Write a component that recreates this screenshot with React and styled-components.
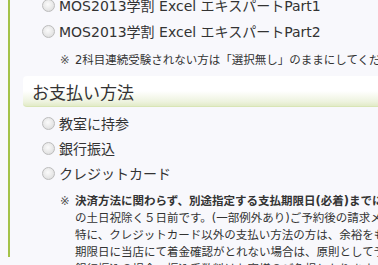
import styled, { createGlobalStyle } from "styled-components"

const GlobalStyle = createGlobalStyle`
  html, body {
    margin: 0;
    padding: 0;
    background: #f8f8fc;
    overflow: hidden;
  }
  body {
    font-family: "DejaVu Sans", "Noto Sans CJK JP", sans-serif;
    color: #333;
  }
`

const Page = styled.div`
  width: 378px;
  height: 265px;
  overflow: hidden;
  padding-left: 8px;
  box-sizing: border-box;
`
const Section = styled.div`
  border-left: 2px solid #a4c24a;
  padding-left: 13px;
  height: 100%;
  width: 600px;
`
const OptionList = styled.ul`
  list-style: none;
  margin: ${(p) => p.$top}px 0 0;
  padding: 0 0 0 19px;
`
const Option = styled.li`
  display: flex;
  align-items: center;
  height: ${(p) => p.$h}px;
  font-size: 14px;
  white-space: nowrap;
`
const Radio = styled.span`
  flex-shrink: 0;
  width: 11px;
  height: 11px;
  border-radius: 50%;
  border: 1px solid #bcbcbc;
  background: radial-gradient(circle at 45% 40%, #fbfbfb 0%, #e6e6e6 60%, #d4d4d4 100%);
  margin-right: 4px;
`
const Note = styled.div`
  display: flex;
  margin: ${(p) => p.$top}px 0 0 18px;
  font-size: 11.5px;
  line-height: 17px;
  white-space: nowrap;
`
const Mark = styled.span`
  width: 15px;
  flex-shrink: 0;
  color: #555;
`
const Body = styled.div`
  strong {
    font-weight: 700;
  }
`
const Heading = styled.h3`
  margin: 7px 0 0;
  height: 31px;
  box-sizing: border-box;
  padding-left: 9px;
  display: flex;
  align-items: center;
  font-size: 17px;
  font-weight: 400;
  color: #333;
  border-radius: 4px;
  background: linear-gradient(to bottom, #ffffff 0%, #ffffff 50%, #eef3df 85%, #e2ebc8 100%);
  border-bottom: 1px solid #d9e5b6;
`

export default function App() {
  return (
    <>
      <GlobalStyle />
      <Page>
        <Section>
          <OptionList $top={-8}>
            <Option $h={26}><Radio />MOS2013学割 Excel エキスパートPart1</Option>
            <Option $h={26}><Radio />MOS2013学割 Excel エキスパートPart2</Option>
          </OptionList>
          <OptionList $top={0}>
            <Note $top={8}>
              <Mark>※</Mark>
              <Body>2科目連続受験されない方は「選択無し」のままにしてください。</Body>
            </Note>
          </OptionList>
          <Heading>お支払い方法</Heading>
          <OptionList $top={3.5}>
            <Option $h={25}><Radio />教室に持参</Option>
            <Option $h={25}><Radio />銀行振込</Option>
            <Option $h={25}><Radio />クレジットカード</Option>
            <Note $top={7}>
              <Mark>※</Mark>
              <Body>
                <strong>決済方法に関わらず、別途指定する支払期限日(必着)までにお支払いください。</strong>
                <br />
                の土日祝除く５日前です。(一部例外あり)ご予約後の請求メールにてご案内いたします。
                <br />
                特に、クレジットカード以外の支払い方法の方は、余裕をもってお手続きください。
                <br />
                期限日に当店にて着金確認がとれない場合は、原則として予約を取り消しとさせていただきます。
                <br />
                銀行振込の場合、振込手数料はお客様のご負担となります。
              </Body>
            </Note>
          </OptionList>
        </Section>
      </Page>
    </>
  )
}
